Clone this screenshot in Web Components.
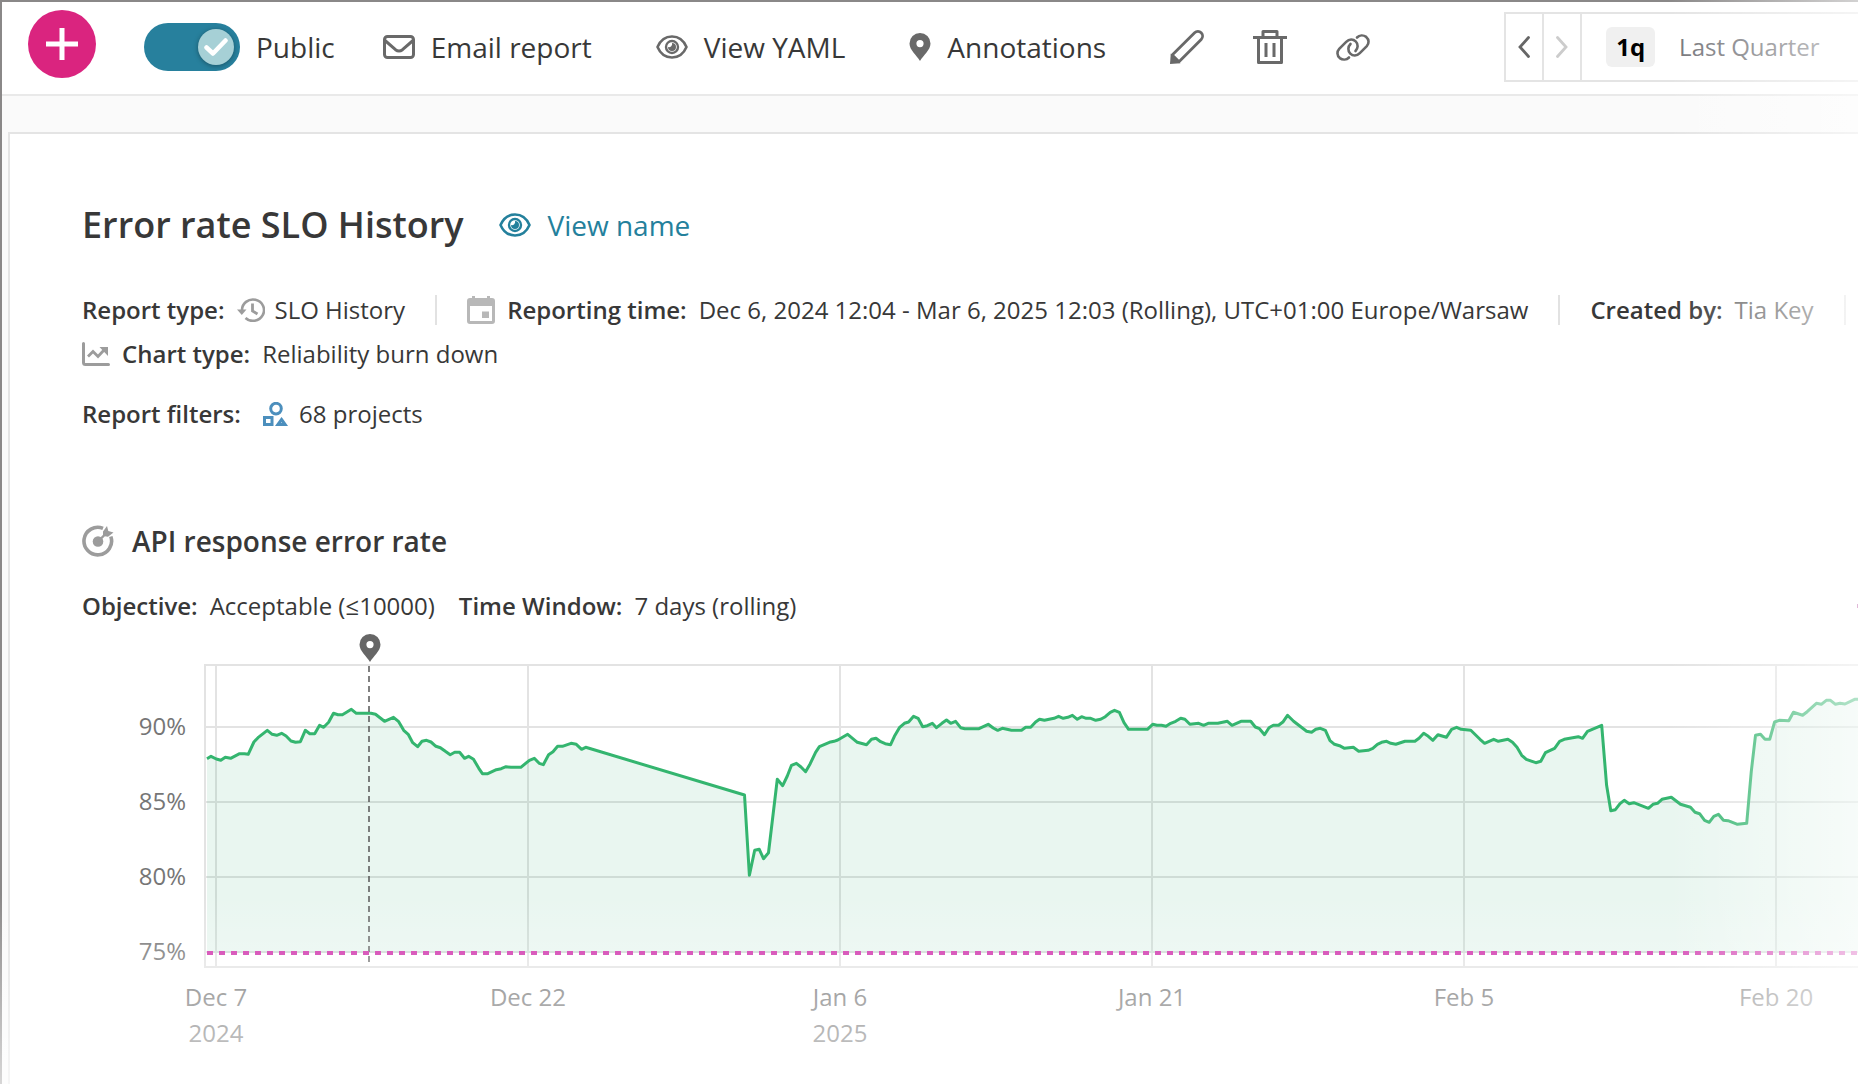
<!DOCTYPE html>
<html lang="en">
<head>
<meta charset="utf-8">
<title>Error rate SLO History</title>
<style>
html, body { margin: 0; height: 100%; }
body { font-family: "Open Sans", "Noto Sans", sans-serif; font-size: 24px; line-height: 32px; color: #383838; background: #fff; overflow: hidden; }
</style>
</head>
<body>
<report-page></report-page>
<script>
const ICONS = {
  plus: [32, 32, '<path d="M16 0v32M0 16h32" fill="none" stroke="currentColor" stroke-width="5"/>'],
  check: [24, 18, '<path d="M2.500 9.500l6.500 6L21.500 2.500" fill="none" stroke="currentColor" stroke-width="4.500" stroke-linecap="round" stroke-linejoin="round"/>'],
  mail: [32, 24, '<rect x="1.500" y="1.500" width="29" height="21" rx="3" fill="none" stroke="currentColor" stroke-width="3"/><path d="M2 5.500l10.500 9.200q3.500 2.600 7 0L30 5.500" fill="none" stroke="currentColor" stroke-width="3"/>'],
  eye: [32, 24, '<path d="M1.500 12C4.500 5 10 1.500 16 1.500S27.500 5 30.500 12C27.500 19 22 22.500 16 22.500S4.500 19 1.500 12z" fill="none" stroke="currentColor" stroke-width="2.600" stroke-linejoin="round"/><circle cx="16" cy="12" r="6" fill="none" stroke="currentColor" stroke-width="2.400"/><path d="M16 8a4 4 0 1 1-4 4 3.200 3.200 0 0 0 4-4z" fill="currentColor"/>'],
  pin: [22, 28, '<path fill="currentColor" fill-rule="evenodd" d="M11 0a10.500 10.500 0 0 1 10.500 10.500C21.500 17 14.500 22 11 28 7.500 22 .5 17 .5 10.500A10.500 10.500 0 0 1 11 0zm0 7a3.600 3.600 0 1 0 0 7.200A3.600 3.600 0 0 0 11 7z"/>'],
  pencil: [34, 34, '<path d="M2.200 25L24.600 2.800a4.600 4.600 0 0 1 6.600 6.600L9 31.800z" fill="none" stroke="currentColor" stroke-width="2.800" stroke-linejoin="round"/><path d="M.8 23.500l9.700 9.700L0 34z" fill="currentColor"/>'],
  trash: [34, 34, '<path d="M0 7.500h34M10 7V1.500h14V7M5.500 8v24.500h23V8M13 13v14M21 13v14" fill="none" stroke="currentColor" stroke-width="3" stroke-linejoin="round"/>'],
  link: [34, 27, '<g fill="none" stroke="currentColor" stroke-width="2.600" stroke-linecap="round"><path d="M13 23.500c-2.500 2.600-6.500 2.600-9.200.6-3-2.600-3-6.600-.6-9.300l7-7c3-3 7-2.800 9.500-.4 2.800 2.800 2.400 7-.2 9.600"/><path d="M21 3.500c2.500-2.600 6.500-2.600 9.200-.6 3 2.600 3 6.600.6 9.300l-7 7c-3 3-7 2.800-9.500.4-2.800-2.800-2.400-7 .2-9.600"/></g>'],
  left: [12, 22, '<path d="M10.500 1.500L2 11l8.500 9.500" fill="none" stroke="currentColor" stroke-width="2.800" stroke-linecap="round"/>'],
  right: [12, 22, '<path d="M1.500 1.500L10 11l-8.500 9.500" fill="none" stroke="currentColor" stroke-width="2.800" stroke-linecap="round"/>'],
  clock: [28, 24, '<path d="M5 12.500A11 10.700 0 1 1 8.500 20" fill="none" stroke="currentColor" stroke-width="2.600"/><path d="M0 11.500h9.500L4.800 17z" fill="currentColor"/><path d="M15.500 5.500v7.500l5 3" fill="none" stroke="currentColor" stroke-width="2.800"/>'],
  calendar: [28, 28, '<path fill="currentColor" fill-rule="evenodd" d="M5 0h3v2h12V0h3v2h2a3 3 0 0 1 3 3v20a3 3 0 0 1-3 3H3a3 3 0 0 1-3-3V5a3 3 0 0 1 3-3h2zM3 10v15h22V10zM15 15.500h7V22h-7z"/>'],
  trend: [28, 24, '<path d="M1.500 1.500V20.500q0 2 2 2H26.500" fill="none" stroke="currentColor" stroke-width="3" stroke-linecap="round"/><path d="M6 14.500l5-5 5 5 7-7.500" fill="none" stroke="currentColor" stroke-width="2.800"/><path d="M17.500 5H26v9z" fill="currentColor"/>'],
  shapes: [26, 24, '<g fill="none" stroke="currentColor" stroke-width="3"><circle cx="13" cy="6.600" r="5.300"/><path d="M1.500 15.500h7.500v7H1.500z"/><path d="M18.500 17.500l3.600 5h-7.200z"/></g>'],
  target: [32, 32, '<path d="M21 3.300A13.800 13.800 0 1 0 28.800 11.500" fill="none" stroke="currentColor" stroke-width="3.600"/><circle cx="16" cy="16.500" r="5.300" fill="currentColor"/><path d="M16 16.500l6-6" stroke="currentColor" stroke-width="2.400"/><path d="M21 11V6.500L25 1l1.300 5 5.200 1.500L26 11.800z" fill="currentColor"/>']
};

const define = (name, css, html) => customElements.define(name, class extends HTMLElement {
  connectedCallback() {
    if (this.shadowRoot) return;
    this.attachShadow({ mode: 'open' }).innerHTML =
      `<style>*{box-sizing:border-box}${css}</style>` + (typeof html === 'function' ? html(this) : html);
  }
});

define('ui-icon', ':host{display:inline-flex;flex:none}svg{display:block}', el => {
  const [w, h, body] = ICONS[el.getAttribute('name')];
  return `<svg width="${w}" height="${h}" viewBox="0 0 ${w} ${h}" aria-hidden="true">${body}</svg>`;
});

define('add-button', `
  :host{display:block;flex:none}
  button{display:flex;align-items:center;justify-content:center;width:68px;height:68px;padding:0;border:0;border-radius:50%;background:#da247f;color:#fff}`,
  '<button aria-label="Add"><ui-icon name="plus"></ui-icon></button>');

define('toggle-switch', `
  :host{display:block;flex:none}
  label{display:flex;align-items:center;gap:16px}
  .track{display:flex;align-items:center;justify-content:flex-end;position:relative;width:96px;height:48px;padding:6px;border-radius:24px;background:#27809d}
  input{position:absolute;inset:0;width:100%;height:100%;margin:0;opacity:0}
  .knob{display:flex;align-items:center;justify-content:center;width:36px;height:36px;border-radius:50%;background:#a6d0d6;color:#fff;box-shadow:0 1px 5px rgba(0,0,0,.35)}`,
  '<label><span class="track"><input type="checkbox" checked><span class="knob"><ui-icon name="check"></ui-icon></span></span><slot></slot></label>');

define('tool-button', `
  :host{display:block;flex:none}
  button{display:flex;align-items:center;gap:16px;padding:0;border:0;background:none;font:inherit;color:inherit;white-space:nowrap}
  ui-icon{color:#696969}`,
  el => `<button aria-label="${el.getAttribute('label') || el.textContent}"><ui-icon name="${el.getAttribute('icon')}"></ui-icon><slot></slot></button>`);

define('range-picker', `
  :host{display:flex;flex:1;height:70px;border:2px solid #e4e4e4;border-right:0;font-size:24px}
  button{display:flex;align-items:center;padding:0;border:0;background:none;font:inherit;color:#666}
  .step{justify-content:center;width:38px;border-right:2px solid #e4e4e4}
  .step[disabled]{color:#ccc}
  .preset{gap:24px;padding-left:24px;color:#76767a;white-space:nowrap}
  b{padding:4px 10px;border-radius:6px;background:#f0f0f0;color:#000}`,
  `<button class="step" aria-label="Previous"><ui-icon name="left"></ui-icon></button>
   <button class="step" aria-label="Next" disabled><ui-icon name="right"></ui-icon></button>
   <button class="preset"><b>1q</b><span>Last Quarter</span></button>`);

define('report-toolbar', `
  :host{display:flex;align-items:center;height:94px;padding:0 0 2px 26px;border-bottom:2px solid #e9e9e9;background:#fff;font-size:28px}
  add-button{margin:0 48px 6px 0}
  .actions{display:flex;align-items:center;gap:64px;margin-left:48px}
  .tools{display:flex;align-items:center;gap:49px}
  range-picker{margin-left:134px}`,
  `<add-button></add-button>
   <toggle-switch>Public</toggle-switch>
   <div class="actions">
     <tool-button icon="mail">Email report</tool-button>
     <tool-button icon="eye">View YAML</tool-button>
     <tool-button icon="pin">Annotations</tool-button>
     <div class="tools">
       <tool-button icon="pencil" label="Edit"></tool-button>
       <tool-button icon="trash" label="Delete"></tool-button>
       <tool-button icon="link" label="Copy link"></tool-button>
     </div>
   </div>
   <range-picker></range-picker>`);

define('meta-item', `
  :host{display:flex;align-items:center;gap:12px;flex:none;white-space:nowrap}
  :host([divided])::after{content:"";width:2px;height:30px;margin-left:18px;background:#e2e2e2}
  b{font-weight:600}`,
  '<slot name="lead"></slot><b><slot name="label"></slot></b><span><slot></slot></span>');

define('report-summary', `
  :host{display:block}
  .title{display:flex;align-items:center;gap:36px}
  h1{margin:0;font-size:36px;line-height:44px;font-weight:600}
  a{display:flex;align-items:center;gap:16px;font-size:28px;color:#24809c;text-decoration:none}
  .row{display:flex;flex-wrap:wrap;align-items:center;gap:12px 30px}
  .meta{margin-top:47px}
  .filters{margin-top:28px}
  .filters .value{padding-left:4px}
  ui-icon{color:#9c9c9c}
  a ui-icon{color:inherit}
  .value{display:flex;align-items:center;gap:10px}
  .cal{color:#b8b8b8}
  .proj{color:#4c8fbd}
  .user{color:#696969}`,
  `<div class="title"><h1>Error rate SLO History</h1><a href="#"><ui-icon name="eye"></ui-icon>View name</a></div>
   <div class="row meta">
     <meta-item divided><span slot="label">Report type:</span><span class="value"><ui-icon name="clock"></ui-icon>SLO History</span></meta-item>
     <meta-item divided><ui-icon slot="lead" class="cal" name="calendar"></ui-icon><span slot="label">Reporting time:</span>Dec 6, 2024 12:04 - Mar 6, 2025 12:03 (Rolling), UTC+01:00 Europe/Warsaw</meta-item>
     <meta-item divided><span slot="label">Created by:</span><span class="user">Tia Key</span></meta-item>
     <meta-item><ui-icon slot="lead" name="trend"></ui-icon><span slot="label">Chart type:</span>Reliability burn down</meta-item>
   </div>
   <div class="row filters">
     <meta-item><span slot="label">Report filters:&nbsp;</span><span class="value"><ui-icon class="proj" name="shapes"></ui-icon>68 projects</span></meta-item>
   </div>`);

/* Reliability samples: x, y pairs in plot pixels, 15px per percentage point */
const SERIES = `3,94.700 7,92.300 12.300,95 16.800,96.300 21.300,93.300 26.600,94.300 35.600,89.700 40.500,89.700 44.200,90.300 49.900,78 54,73.700 63.300,66.300 68.200,70.300 72.700,71.300 77.600,69.300 82.100,72 87,77 91.500,78.300 96.400,77.700 101.300,66.300 105.800,69.700 110.700,69.700 115.600,61.300 119.700,63.300 124.600,58.300 129.500,49.300 134,50.700 138.400,50.700 147.400,45.300 152.300,49.300 167,49.300 171.500,50.300 180.500,57.300 189.500,53.300 194.400,57.300 199.700,66.300 204.200,70.300 208.700,78.700 213.600,82.700 218,77.300 222.500,76.300 227,78 231.900,82.300 236.400,83.700 241.300,87.300 246.200,90.700 250.700,88.300 255.600,88.300 260.500,94.300 264.600,92.300 269.500,95.300 274.800,104.300 278.400,109.700 283.800,109.700 292.300,105.700 297.200,104.700 302,102.700 307,103.300 316.800,103.300 325.400,96.300 330.300,94.300 335.200,99.300 339.300,100.700 344.600,90.700 349,87.700 353.600,82.300 358.400,82.300 367,79.300 372.300,80.300 377.600,85.300 381.700,83.300 540.500,131 545.400,211.300 550.700,186.300 555.300,185.300 559.500,194.700 564.500,188.700 573.300,115.300 578.700,121.700 583.300,112 587.500,101.300 592.400,99.300 597,103 601.600,107.700 606.200,99.700 611.600,88.300 615.400,82.700 625.400,78.300 630,77.300 633.800,76 643.700,70.300 653.300,78.300 662.500,80.700 667.500,75.300 672,74.300 676.600,77.700 681.200,79.700 686.600,80.700 690.400,72.300 695.400,63.700 700.400,59.300 704.600,58 709.600,52.300 714.100,54.300 718.700,62.700 723.300,61.700 728.300,59.300 732.500,63.700 737.900,59.300 742.500,56 746.700,59.300 751.600,57.300 756.600,63.700 760.800,64.700 775,64.700 784.200,60.300 789.200,64 793.700,66.300 798.300,64.300 807.500,66.300 817.500,66.300 821.700,63.300 826.700,63.300 831.600,58 835.500,55.300 840.400,56.300 850,54.300 854.600,52.300 859.200,54.300 863.800,53.300 868.400,51.300 873.300,55.300 877.600,52.700 882.200,54.300 886.700,54.300 891.700,56.300 896.700,55.300 901.300,52.700 906.300,48.300 910.500,46.300 915.400,48.300 920,58.700 924.600,65.300 943.400,65.300 948.700,60.300 952.900,61.300 957.500,61.300 962,62.300 966.700,59.300 971.700,57.300 976.700,54.300 980.900,55.300 985.900,60.300 994.700,59.300 999.600,61.300 1004.200,59.300 1013.800,59.300 1023.400,57.300 1028,61.300 1037,57.300 1046.700,57.300 1051.300,63 1055.500,64.700 1060.500,70.700 1065,63.700 1069.300,61.300 1074.600,61.300 1079.200,57.700 1083.500,51.300 1089.600,57.300 1102.600,67.300 1107.600,68.300 1111.800,65.300 1116.400,64.300 1121.400,66.300 1126,76.700 1130.500,80.300 1135.500,81.700 1140.500,84.300 1149.300,83.300 1154.700,87.300 1164.200,86.300 1168.800,84.300 1173.400,80.300 1177.600,78.300 1182.600,77.300 1186.800,79.300 1191.800,80.300 1201,77.300 1210.900,77.300 1215,74.300 1219.700,69.300 1224.300,72.300 1228.900,76.300 1233.900,70.700 1242.300,73.300 1247.600,65.300 1252.600,63.300 1257.200,65.300 1266.800,66.300 1276,75.300 1280.600,79.300 1289.700,75.300 1294.300,77.300 1303.900,75.300 1308.500,78.300 1313,83.300 1317.700,91.300 1322.300,95.300 1331.800,98.700 1336.800,97.300 1341.400,88.700 1350.600,84.300 1355.600,77.300 1360.200,75.300 1374.300,72.700 1378.500,74.300 1383.500,67.300 1397.700,61.300 1402.600,121.300 1406.800,146.700 1411.400,145.700 1416,139.700 1420.200,136.300 1425.200,139.700 1429.800,138.700 1444.400,144.300 1449,140.300 1453.500,139.300 1458,135.300 1467.300,133.300 1476.500,140.300 1486.500,143.300 1491,148.300 1495.600,149.700 1500.600,156.300 1505.200,158.300 1509.800,152.300 1514.400,150.300 1519.400,156.300 1524,156.700 1533.500,160.300 1542.700,159.300 1547.300,107.300 1551.500,71.300 1556.500,70.300 1561,75.300 1565.700,75.300 1570.600,58 1575.200,56.300 1584.800,56.700 1589.400,48.300 1598.600,51.300 1603.200,47.700 1612.400,39.300 1617.300,40.300 1622.300,36.300 1626.500,36.300 1631.500,40.300 1636,39.300 1641,40 1650.600,35.300 1656,35.300`;

define('burn-down-chart', `
  :host{display:grid;grid-template-columns:104px minmax(0,1fr);column-gap:18px;color:#767676}
  .y{display:flex;flex-direction:column;gap:43px;padding-top:76px;text-align:right}
  .plot{display:block;width:100%;height:334px;overflow:hidden}
  .x{grid-column:2;display:flex;margin:11px 0 0 -144px}
  .x span{flex:none;width:312px;text-align:center;line-height:36px}`,
  () => {
    const ticks = [0, 1, 2, 3, 4, 5];
    return `<div class="y"><span>90%</span><span>85%</span><span>80%</span><span>75%</span></div>
    <svg class="plot" role="img" aria-label="Reliability burn down chart">
      <g transform="translate(155 0)" color="#666">${ICONS.pin[2]}</g>
      <g transform="translate(0 30)">
        <g stroke="#e3e3e3" stroke-width="2" fill="none">
          <path d="M4000 1H1V303H4000"/>
          <path d="M2 63H4000M2 138H4000M2 213H4000M2 288H4000"/>
          <path d="${ticks.map(i => `M${12 + i * 312} 2V302`).join('')}"/>
        </g>
        <polygon points="3,289 ${SERIES} 1656,289" fill="#27a567" fill-opacity=".1"/>
        <polyline points="${SERIES}" fill="none" stroke="#34b56f" stroke-width="3" stroke-linejoin="round"/>
        <path d="M165 2V302" stroke="#555" stroke-width="1.500" stroke-dasharray="6 4"/>
        <path d="M3 289H4000" stroke="#cf32ab" stroke-width="4" stroke-dasharray="6 6"/>
      </g>
    </svg>
    <div class="x"><span>Dec 7<br>2024</span><span>Dec 22</span><span>Jan 6<br>2025</span><span>Jan 21</span><span>Feb 5</span><span>Feb 20</span></div>`;
  });

define('slo-section', `
  :host{display:block}
  h2{display:flex;align-items:center;gap:18px;margin:0;font-size:28px;line-height:40px;font-weight:600}
  h2 ui-icon{color:#9c9c9c}
  .facts{display:flex;align-items:center;gap:24px;margin:29px 0 12px}
  .key{flex:none;width:1px;height:4px;margin-left:auto;background:#b0489a}`,
  `<h2><ui-icon name="target"></ui-icon><slot></slot></h2>
   <div class="facts">
     <meta-item><span slot="label">Objective:</span>Acceptable (≤10000)</meta-item>
     <meta-item><span slot="label">Time Window:</span>7 days (rolling)</meta-item>
     <span class="key"></span>
   </div>
   <burn-down-chart></burn-down-chart>`);

define('report-page', `
  :host{display:flex;flex-direction:column;position:relative;min-height:100%;box-sizing:border-box;border:solid #8a8888;border-width:2px 0 0 2px;background:#fafafa}
  main{flex:1;margin:36px 0 0 6px;padding:69px 0 0 72px;border:solid #e4e4e4;border-width:2px 0 0 2px;background:#fff}
  slo-section{margin-top:91px}
  .fade{position:absolute;inset:-2px 0 0 -2px;pointer-events:none;
    background:linear-gradient(to right,transparent calc(100% - 190px),rgba(255,255,255,.62)),linear-gradient(to bottom,transparent calc(100% - 190px),rgba(255,255,255,.66))}`,
  `<report-toolbar></report-toolbar>
   <main><report-summary></report-summary><slo-section>API response error rate</slo-section></main>
   <div class="fade"></div>`);
</script>
</body>
</html>
